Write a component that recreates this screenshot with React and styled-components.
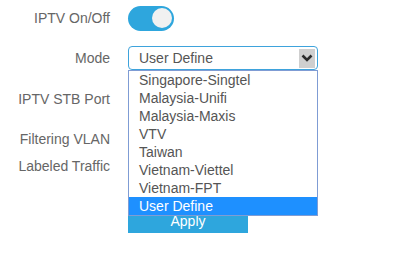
import React from "react";
import styled, { createGlobalStyle } from "styled-components";

const Global = createGlobalStyle`
  body {
    margin: 0;
    background: #fff;
    font-family: "Liberation Sans", Arial, sans-serif;
  }
`;

const Form = styled.div`
  position: relative;
  width: 417px;
  height: 264px;
  padding-top: 5px;
  box-sizing: border-box;
  overflow: hidden;
`;

const Row = styled.div`
  display: flex;
  align-items: center;
  gap: 18px;
  height: ${p => p.h}px;
`;

const Label = styled.div`
  width: 110px;
  text-align: right;
  font-size: 14px;
  color: #666;
`;

const Field = styled.div`
  position: relative;
  display: flex;
  align-items: center;
`;

const Toggle = styled.div`
  width: 46px;
  height: 25px;
  border-radius: 13px;
  background: #2ea6dd;
  display: flex;
  align-items: center;
  justify-content: flex-end;
  padding: 0 2px;
  box-sizing: border-box;
`;

const Knob = styled.div`
  width: 20px;
  height: 20px;
  border-radius: 50%;
  background: #f1f1f1;
`;

const Select = styled.div`
  width: 190px;
  height: 24px;
  box-sizing: border-box;
  border: 1px solid #3ea3dc;
  border-radius: 4px;
  display: flex;
  align-items: center;
  justify-content: space-between;
  padding: 0 2px 0 10px;
  font-size: 14px;
  color: #555;
`;

const Arrow = styled.div`
  width: 16px;
  height: 19px;
  background: #cfcfcf;
  display: flex;
  align-items: center;
  justify-content: center;
`;

const List = styled.div`
  position: absolute;
  top: 100%;
  left: 0;
  width: 190px;
  box-sizing: border-box;
  border: 1px solid #7f9cd4;
  background: #fff;
  z-index: 2;
`;

const Option = styled.div`
  height: 18px;
  line-height: 18px;
  padding-left: 10px;
  font-size: 14px;
  color: ${p => (p.active ? "#fff" : "#555")};
  background: ${p => (p.active ? "#1e90ff" : "transparent")};
`;

const ButtonRow = styled.div`
  padding-left: 128px;
  margin-top: 42px;
`;

const Apply = styled.div`
  width: 120px;
  height: 24px;
  background: #2ea6dd;
  color: #fff;
  font-size: 14px;
  text-align: center;
  line-height: 24px;
`;

const options = [
  "Singapore-Singtel",
  "Malaysia-Unifi",
  "Malaysia-Maxis",
  "VTV",
  "Taiwan",
  "Vietnam-Viettel",
  "Vietnam-FPT",
  "User Define",
];

export default function App() {
  return (
    <Form>
      <Global />
      <Row h={26}>
        <Label>IPTV On/Off</Label>
        <Field>
          <Toggle>
            <Knob />
          </Toggle>
        </Field>
      </Row>
      <Row h={54}>
        <Label>Mode</Label>
        <Field>
          <Select>
            User Define
            <Arrow>
              <svg width="12" height="8" viewBox="0 0 12 8">
                <path d="M1.5 1.5 L6 6 L10.5 1.5" fill="none" stroke="#2b2b2b" strokeWidth="2.6" />
              </svg>
            </Arrow>
          </Select>
          <List>
            {options.map(o => (
              <Option key={o} active={o === "User Define"}>{o}</Option>
            ))}
          </List>
        </Field>
      </Row>
      <Row h={28}>
        <Label>IPTV STB Port</Label>
      </Row>
      <Row h={52}>
        <Label>Filtering VLAN</Label>
      </Row>
      <Row h={2}>
        <Label>Labeled Traffic</Label>
      </Row>
      <ButtonRow>
        <Apply>Apply</Apply>
      </ButtonRow>
    </Form>
  );
}
